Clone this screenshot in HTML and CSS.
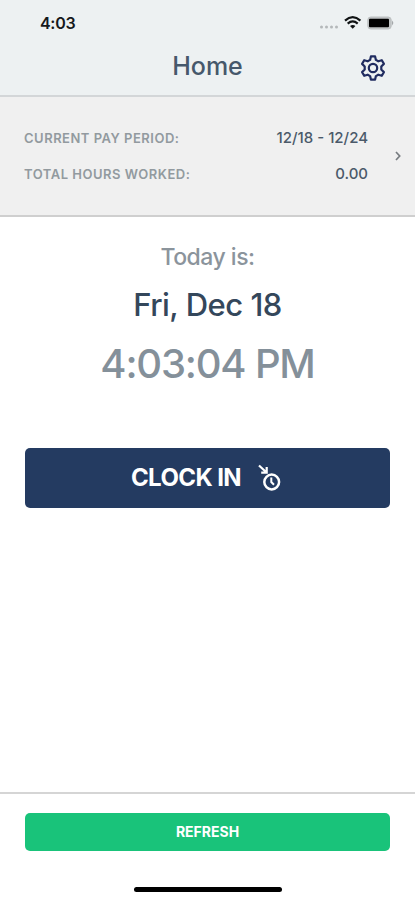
FILE: index.html
```html
<!DOCTYPE html>
<html lang="en">
<head>
<meta charset="utf-8">
<title>Home</title>
<link rel="stylesheet" href="styles.css">
</head>
<body>
<div class="screen">
  <header class="header">
    <div class="status">
      <span class="status-time">4:03</span>
      <svg class="status-icons" width="76" height="16" viewBox="0 0 76 16">
        <g fill="#b4b8ba"><circle cx="2.5" cy="12" r="1.500"/><circle cx="7.5" cy="12" r="1.500"/><circle cx="12.5" cy="12" r="1.500"/><circle cx="17.5" cy="12" r="1.500"/></g>
        <g fill="none" stroke="#101314" stroke-width="2.200"><path d="M26 5.6Q33.700 -1.200 41.400 5.600"/><path d="M28.700 8.600Q33.700 4.300 38.700 8.600"/></g>
        <path d="M31 11Q33.700 8.900 36.400 11L33.700 13.700Z" fill="#101314"/>
        <rect x="48.800" y="2" width="23.400" height="12" rx="3" fill="#c0c3c4" stroke="#bcc0c1" stroke-width="1"/>
        <rect x="50" y="3.800" width="20" height="8.400" rx="1" fill="#000"/>
        <path d="M73 5.600Q75.600 8 73 10.400Z" fill="#a4a8aa"/>
      </svg>
    </div>
    <div class="titlebar">
      <h1 class="title">Home</h1>
      <svg class="gear" width="26" height="26" viewBox="0 0 26 26" fill="none" stroke="#202c60" stroke-width="2.200" stroke-linejoin="round">
        <path d="M10.900 1.400H15.100L15.900 4.900L18.300 6.300L21.800 5.200L23.900 8.900L21.300 11.500V14.500L23.900 17.100L21.800 20.800L18.300 19.700L15.900 21.100L15.100 24.600H10.900L10.100 21.100L7.700 19.700L4.200 20.800L2.100 17.100L4.700 14.500V11.500L2.100 8.900L4.200 5.200L7.700 6.300L10.100 4.900Z"/>
        <circle cx="13" cy="13" r="4.200"/>
      </svg>
    </div>
  </header>
  <section class="summary">
    <div class="rows">
      <div class="row"><span class="label">CURRENT PAY PERIOD:</span><span class="value">12/18 - 12/24</span></div>
      <div class="row"><span class="label">TOTAL HOURS WORKED:</span><span class="value">0.00</span></div>
    </div>
    <svg class="chevron" width="6" height="10" viewBox="0 0 6 10" fill="none" stroke="#777c80" stroke-width="1.700"><path d="M1 1L4.700 5L1 9"/></svg>
  </section>
  <main class="main">
    <div class="today">Today is:</div>
    <div class="date">Fri, Dec 18</div>
    <div class="time">4:03:04 PM</div>
    <button class="clock-in"><span>CLOCK IN</span>
      <svg class="clock-icon" width="24" height="28" viewBox="0 0 24 28" fill="none" stroke="#fff" stroke-width="2.200">
        <path d="M1 1.500L8 8M8.700 3V8.700H3.200"/>
        <circle cx="13.700" cy="18" r="7.400" stroke-width="2.500"/><path d="M13.300 13.500V18L16 20.700" stroke-width="2"/>
      </svg>
    </button>
  </main>
  <footer class="footer">
    <button class="refresh"><span>REFRESH</span></button>
    <div class="home-indicator"></div>
  </footer>
</div>
</body>
</html>
```
FILE: styles.css
```css
* { box-sizing: border-box; }
body { margin: 0; font-family: Inter, "Liberation Sans", sans-serif; background: #fff; }
.screen { width: 415px; height: 900px; display: flex; flex-direction: column; overflow: hidden; }
.header { height: 97px; background: #edf1f2; border-bottom: 2px solid #d3d6d8; }
.status { height: 46px; padding: 0 20px 0 40px; display: flex; align-items: center; justify-content: space-between; }
.status-time { font-size: 16px; font-weight: 600; letter-spacing: -.3px; color: #15191b; }
.titlebar { height: 42px; display: grid; grid-template-columns: 1fr auto 1fr; align-items: center; padding: 0 29px; }
.title { grid-column: 2; margin: -2px 0 0; font-size: 25px; font-weight: 550; line-height: 30px; color: #46586b; }
.gear { justify-self: end; margin-top: 2px; }
.summary { height: 120px; background: #f0f0f0; border-bottom: 2px solid #cfcfcf; display: flex; align-items: center; justify-content: space-between; padding: 0 14px 0 24px; }
.rows { width: 344px; }
.row { height: 36px; display: flex; align-items: center; justify-content: space-between; }
.label { font-size: 13px; font-weight: 600; letter-spacing: .5px; color: #929a9f; }
.value { font-size: 15px; font-weight: 500; color: #4b5a6a; margin-top: -1px; }
.main { flex: 1; display: flex; flex-direction: column; align-items: center; padding-top: 22px; }
.today { font-size: 23px; font-weight: 500; line-height: 36px; letter-spacing: -.5px; color: #8b949c; }
.date { font-size: 31px; font-weight: 550; line-height: 40px; margin-top: 10px; letter-spacing: -.5px; color: #34475b; }
.time { font-size: 40px; font-weight: 550; line-height: 50px; margin-top: 14px; letter-spacing: -1.2px; color: #84909a; }
button { border: 0; padding: 0; font-family: inherit; color: #fff; display: flex; align-items: center; justify-content: center; }
.clock-in { width: 365px; height: 60px; margin-top: 59px; border-radius: 5px; background: #243b61; font-size: 24px; font-weight: 650; letter-spacing: -.6px; gap: 17px; padding-right: 2px; }
.clock-in span { margin-top: -1px; }
.footer { height: 108px; border-top: 2px solid #d5d5d5; display: flex; flex-direction: column; align-items: center; padding-top: 19px; }
.refresh { width: 365px; height: 38px; border-radius: 5px; background: #19c37a; font-size: 14px; font-weight: 700; padding-bottom: 2px; }
.home-indicator { width: 148px; height: 5px; margin-top: 36px; border-radius: 3px; background: #000; }
```
